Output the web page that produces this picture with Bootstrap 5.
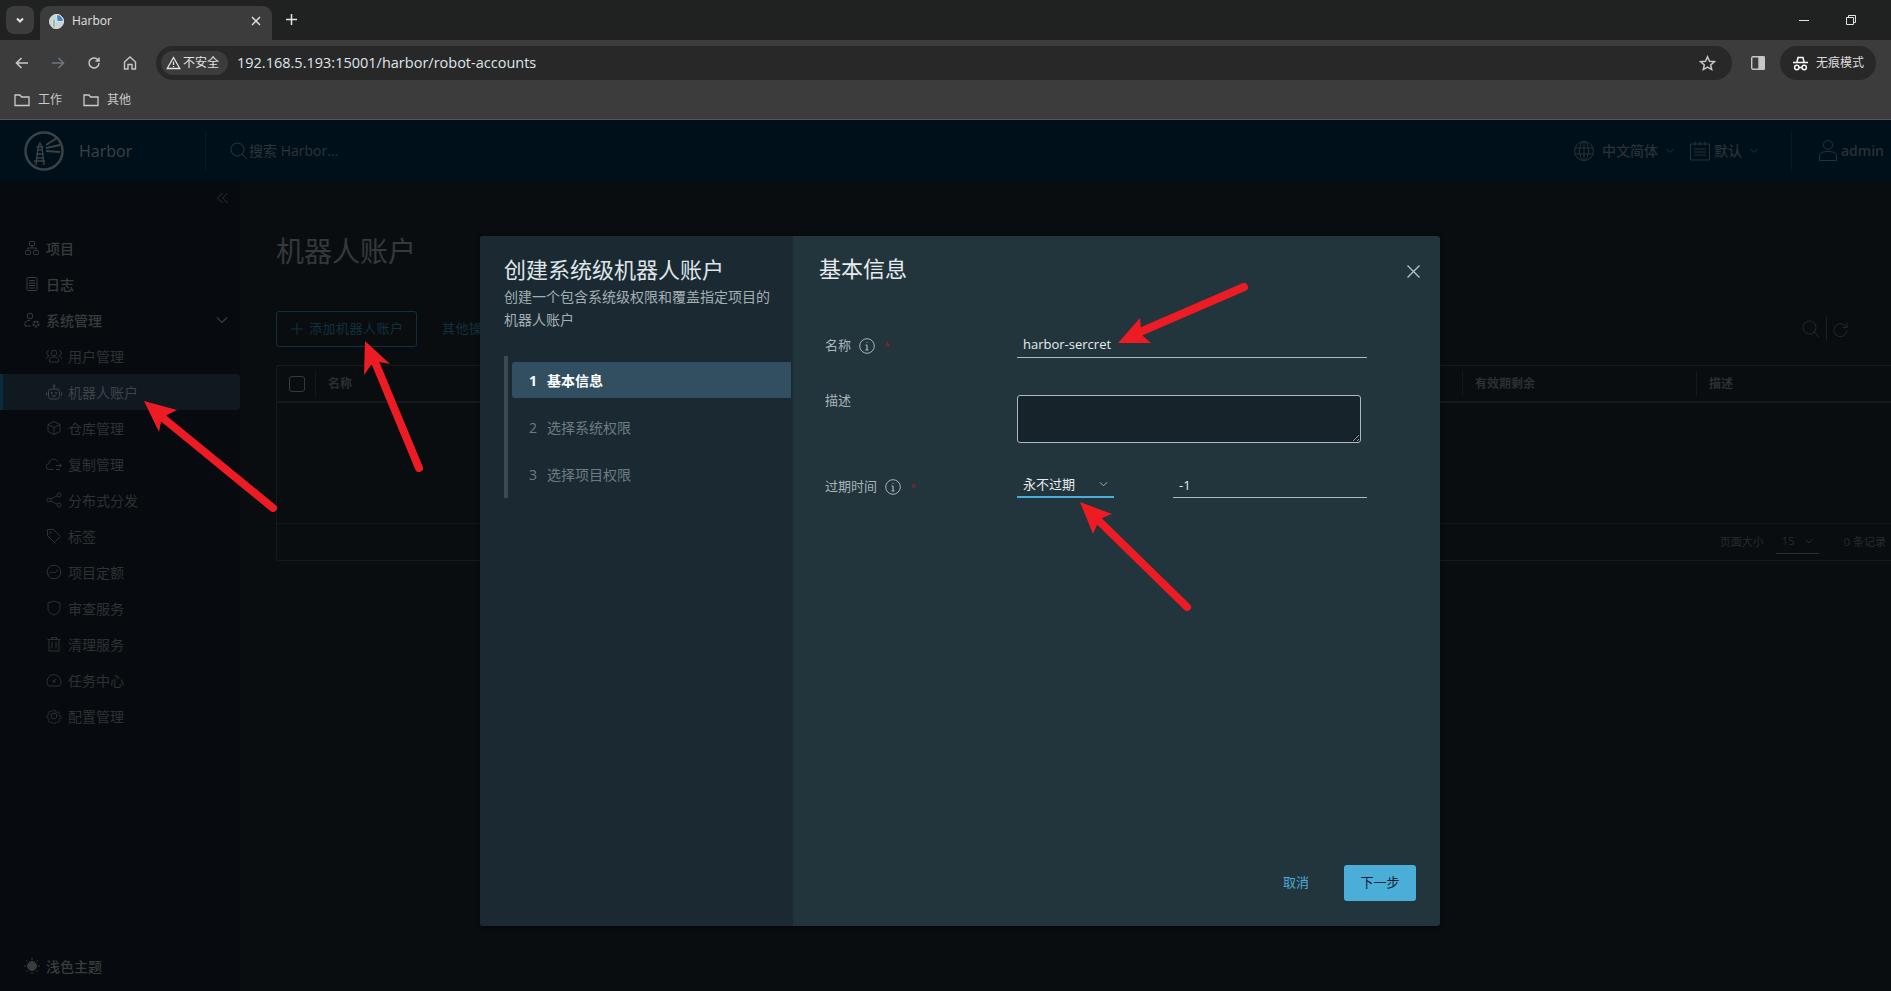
<!DOCTYPE html>
<html lang="zh-CN">
<head>
    <meta charset="UTF-8">
    <title>Harbor</title>
    <link href="https://cdn.jsdelivr.net/npm/bootstrap@5.3.0/dist/css/bootstrap.min.css" rel="stylesheet">
    <style>
        html, body { height: 991px; overflow: hidden; }
        body {
            background: #090d10;
            font-family: "Open Sans", "Noto Sans CJK SC", sans-serif;
            font-size: 14px;
            position: relative;
        }
        svg { display: block; flex: none; fill: none; stroke: currentColor; }

        /* browser chrome */
        .tab-strip { height: 40px; background: #202221; color: #e3e3e3; }
        .tab-menu { width: 28px; height: 28px; margin: 6px 6px 0 6px; background: #3c3c3c; border-radius: 8px; }
        .tab-item { width: 232px; height: 34px; margin-top: 6px; padding: 0 11px 4px 9px; background: #3c3c3c; border-radius: 9px 9px 0 0; font-size: 12px; }
        .tab-new { margin: 14px 0 0 14px; }
        .win-btns { margin: 15px 0 0 auto; gap: 36px; padding-right: 35px; }
        .tool-row { height: 46px; background: #3c3c3c; color: #c7c7c7; padding: 0 0 0 14px; }
        .nav-icons { gap: 20px; width: 142px; }
        .omnibox { width: 1576px; height: 34px; background: #282828; border-radius: 17px; padding: 0 16px 0 5px; }
        .sec-pill { width: 67px; height: 24px; background: #3c3c3c; border-radius: 12px; font-size: 12px; color: #e3e3e3; padding-left: 5px; gap: 2px; }
        .url-text { margin-left: 9px; font-size: 14.5px; color: #dfe6ec; }
        .panel-ico { margin-left: 18px; }
        .incog-pill { width: 96px; height: 34px; background: #282828; border-radius: 17px; font-size: 12px; color: #dcdcdc; padding-left: 12px; gap: 7px; margin-left: 14px; }
        .bookmark-row { height: 34px; background: #3c3c3c; border-bottom: 1px solid #565656; color: #c9c9c9; font-size: 12px; padding: 0 0 5px 14px; gap: 21px; }

        /* harbor header, dimmed by the modal backdrop */
        .hb-header { height: 61px; background: #00101a; color: #2f383c; }
        .hb-brand { width: 206px; height: 40px; padding-left: 24px; gap: 15px; border-right: 1px solid #0a1a22; font-size: 16px; color: #3a4245; }
        .hb-search { padding-left: 24px; gap: 1px; color: #2c3437; }
        .hb-right { margin-left: auto; height: 40px; font-size: 14px; color: #293136; padding-right: 7px; }
        .hb-sep { width: 1px; height: 40px; background: #0a1a22; margin: 0 27px 0 33px; }

        /* side menu */
        .hb-body { height: 810px; }
        .side-nav { width: 240px; background: #070b0f; color: #2e3437; }
        .side-collapse { height: 49px; padding: 11px 12px 0 0; color: #2b3135; }
        .side-row { height: 36px; padding-left: 24px; gap: 6px; color: #373c3e; font-weight: 500; }
        .side-sub { padding-left: 46px; color: #2c3235; font-weight: 400; }
        .side-active { background: #101820; border-left: 3px solid #0a2c3c; border-radius: 0 4px 4px 0; padding-left: 43px; color: #3e4448; }
        .side-foot { margin-top: auto; margin-bottom: 7px; }
        .side-chev { margin-left: auto; margin-right: 12px; }

        /* page behind the modal */
        .hb-main { flex: 1; padding-left: 36px; min-width: 0; }
        .page-title { height: 40px; margin: 50px 0 40px; font-size: 28px; line-height: 40px; color: #33393c; }
        .add-btn { width: 141px; height: 36px; border: 1px solid #0f3040; border-radius: 3px; color: #12303e; font-size: 13px; letter-spacing: .5px; gap: 6px; padding-left: 14px; }
        .more-btn { margin-left: 25px; color: #12303e; font-size: 13px; letter-spacing: .5px; }
        .grid-tools { margin-left: auto; padding-right: 42px; color: #22282b; gap: 6px; }
        .tool-sep { width: 1px; height: 24px; background: #1a2023; }
        .grid-box { margin-top: 18px; border: 1px solid #151a1d; border-right: 0; border-radius: 3px 0 0 3px; font-size: 12px; color: #2b3032; }
        .grid-head { height: 37px; border-bottom: 2px solid #14191c; font-weight: 600; }
        .grid-cell { height: 25px; border-right: 1px solid #14191c; padding-left: 12px; }
        .grid-first { border-left: 1px solid #14191c; flex-grow: 1; }
        .grid-exp { width: 234px; }
        .grid-desc { width: 194px; padding-left: 12px; }
        .grid-check { width: 16px; height: 16px; border: 1px solid #34393b; border-radius: 3px; margin: 0 10px 0 12px; }
        .grid-empty { height: 121px; border-bottom: 1px solid #14191c; }
        .grid-foot { height: 36px; font-size: 11px; color: #262b2e; padding-right: 5px; }
        .size-pick { width: 43px; height: 24px; margin: 0 25px 0 12px; border-bottom: 1px solid #2b3033; padding: 0 6px; }

        /* modal */
        .wizard { position: absolute; left: 480px; top: 236px; width: 960px; height: 690px; background: #22343c; border-radius: 3px; overflow: hidden; box-shadow: 0 1px 4px rgba(0,0,0,.4); }
        .wizard-side { width: 313px; flex: none; background: #1b2a32; border-right: 1px solid #1a2b34; padding-top: 18px; }
        .wizard-head { padding-left: 24px; font-size: 22px; line-height: 30px; color: #dfe5e8; margin-bottom: 1px; }
        .wizard-desc { padding-left: 24px; width: 296px; font-size: 14px; line-height: 23px; color: #a4afb4; }
        .step-rail { margin: 25px 0 0 24px; border-left: 4px solid #3a4a4f; padding: 6px 1px 6px 4px; gap: 11px; }
        .step-item { height: 36px; padding-left: 17px; gap: 10px; color: #6d7c82; font-size: 14px; }
        .step-on { background: #324f61; color: #fff; font-weight: 700; border-radius: 3px 0 0 3px; }
        .wizard-main { padding: 16px 24px 25px 26px; }
        .wizard-title { font-size: 22px; line-height: 32px; color: #e6ecef; }
        .wizard-close { color: #b9c5ca; margin-top: 13px; margin-right: -4px; }
        .form-line { padding-left: 6px; }
        .form-name { width: 192px; gap: 8px; font-size: 13px; color: #a9b5b9; }
        .form-name b { color: #9b1c1c; font-weight: 400; font-size: 11px; margin-left: 1px; }
        .name-one { padding-top: 3px; }
        .name-two { padding-top: 1px; }
        .name-three { padding-top: 5px; }
        .line-input, .line-input:focus {
            height: 27px; padding: 2px 6px 0; background: transparent; border: 0; border-bottom: 1px solid #acbac3;
            border-radius: 0; color: #e8edef; font-size: 13px; box-shadow: none;
        }
        .line-select, .line-select:focus {
            width: 97px; height: 27px; padding: 2px 6px 0; background-color: transparent; border: 0; border-bottom: 2px solid #4aaed9;
            border-radius: 0; color: #e8edef; font-size: 13px; box-shadow: none;
            background-image: url("data:image/svg+xml,%3csvg xmlns='http://www.w3.org/2000/svg' viewBox='0 0 10 6'%3e%3cpath fill='none' stroke='%23acbac3' d='M1 1l4 4 4-4'/%3e%3c/svg%3e");
            background-size: 9px 6px; background-position: right 6px center;
        }
        .area-input, .area-input:focus {
            width: 344px; height: 48px; margin-top: 5px; background: #17232b; border: 1px solid #acbac3; border-radius: 3px; box-shadow: none;
        }
        .btn-cancel { color: #4aaed9; font-size: 13px; margin-right: 35px; }
        .btn-next, .btn-next:hover { width: 72px; height: 36px; padding: 0; background: #4aaed9; border: 0; border-radius: 3px; color: #0a2230; font-size: 13px; }
        .name-input, .name-input:focus { width: 350px; padding-top: 0; }
        .days-input, .days-input:focus { width: 194px; margin-left: 59px; }
        .line-one { margin-top: 47px; }
        .line-two { margin-top: 32px; }
        .line-three { margin-top: 28px; }

        /* red annotation arrows over the screenshot */
        .note-arrows { position: absolute; left: 0; top: 0; width: 1891px; height: 991px; pointer-events: none; stroke: none; }
    </style>
</head>
<body>
    <!-- browser chrome -->
    <div class="tab-strip d-flex align-items-start">
        <div class="tab-menu d-flex align-items-center justify-content-center">
            <svg width="10" height="10" viewBox="0 0 10 10" stroke-width="2"><path d="M2 3.500l3 3 3-3"/></svg>
        </div>
        <div class="tab-item d-flex align-items-center">
            <svg width="15" height="15" viewBox="0 0 15 15" stroke="none"><circle cx="7.500" cy="7.500" r="7" fill="#c8d2d8"/><path d="M7.500.5a7 7 0 0 1 7 7H8z" fill="#3f86c6"/><path d="M4 5h2v9H4z" fill="#3aa655"/></svg>
            <span class="ms-2 flex-grow-1">Harbor</span>
            <svg width="10" height="10" viewBox="0 0 10 10" stroke-width="1.400"><path d="M1 1l8 8M9 1l-8 8"/></svg>
        </div>
        <svg class="tab-new" width="11" height="11" viewBox="0 0 11 11" stroke-width="1.500"><path d="M5.500 0v11M0 5.500h11"/></svg>
        <div class="win-btns d-flex">
            <svg width="11" height="10" viewBox="0 0 11 10"><path d="M0 5.500h10"/></svg>
            <svg width="10" height="10" viewBox="0 0 10 10"><path d="M.5 2.500h7v7h-7zM2.500 2.500V.5h7v7h-2"/></svg>
        </div>
    </div>
    <div class="tool-row d-flex align-items-center">
        <div class="nav-icons d-flex align-items-center">
            <svg width="16" height="16" viewBox="0 0 16 16" stroke-width="1.600"><path d="M14 8H2.500M7.500 3l-5 5 5 5"/></svg>
            <svg class="text-secondary" width="16" height="16" viewBox="0 0 16 16" stroke-width="1.600"><path d="M2 8h11.500M8.500 3l5 5-5 5"/></svg>
            <svg width="16" height="16" viewBox="0 0 16 16" stroke-width="1.500"><path d="M13 8a5 5 0 1 1-1.500-3.600L13 6M13 2.500V6H9.500"/></svg>
            <svg width="16" height="16" viewBox="0 0 16 16" stroke-width="1.400"><path d="M2.500 7L8 2l5.500 5v7H10V9.500H6V14H2.500z"/></svg>
        </div>
        <div class="omnibox d-flex align-items-center">
            <div class="sec-pill d-flex align-items-center">
                <svg width="15" height="14" viewBox="0 0 15 14" stroke-width="1.300"><path d="M7.500 1.500l6.300 11H1.200zM7.500 5.500v3.500M7.500 10v1"/></svg>
                <span>不安全</span>
            </div>
            <span class="url-text">192.168.5.193:15001/harbor/robot-accounts</span>
            <svg class="ms-auto" width="17" height="17" viewBox="0 0 17 17" stroke-width="1.500"><path d="M8.500 1.800l2 4.400 4.800.5-3.600 3.200 1 4.700-4.200-2.400-4.200 2.400 1-4.700L1.700 6.700l4.800-.5z"/></svg>
        </div>
        <svg class="panel-ico" width="16" height="16" viewBox="0 0 16 16" stroke-width="1.400"><rect x="1.700" y="1.700" width="12.600" height="12.600" rx="1.500"/><path d="M9 1.700h4.500a.8.8 0 0 1 .8.800v11a.8.8 0 0 1-.8.800H9z" fill="currentColor"/></svg>
        <div class="incog-pill d-flex align-items-center">
            <svg width="17" height="17" viewBox="0 0 17 17" stroke-width="1.500" class="text-light"><path d="M5 7l1-4.500h5L12 7M1 7.500h15"/><circle cx="4.800" cy="12.500" r="2.200"/><circle cx="12.200" cy="12.500" r="2.200"/><path d="M7 12.500h3"/></svg>
            <span>无痕模式</span>
        </div>
    </div>
    <div class="bookmark-row d-flex align-items-center">
        <div class="d-flex align-items-center gap-2">
            <svg width="16" height="14" viewBox="0 0 16 14" stroke-width="1.300"><path d="M1 2h5l1.500 2H15v8.500H1z"/></svg><span>工作</span>
        </div>
        <div class="d-flex align-items-center gap-2">
            <svg width="16" height="14" viewBox="0 0 16 14" stroke-width="1.300"><path d="M1 2h5l1.500 2H15v8.500H1z"/></svg><span>其他</span>
        </div>
    </div>

    <!-- harbor page -->
    <header class="hb-header d-flex align-items-center">
        <div class="hb-brand d-flex align-items-center">
            <svg width="40" height="40" viewBox="0 0 40 40" stroke="#3c4447"><circle cx="20" cy="20" r="18.500" stroke-width="2.500"/><path d="M10 30h11M12 27h8M12.500 23h7M13 19h6M14 16l2-4 2 4M12.500 16h7" stroke-width="1.400"/><path d="M12 34l2-18M20 34l-2-18" stroke-width="1.400"/><path d="M22 14l11-7M22 17l14-3M22 20l14 1" stroke-width="2"/></svg>
            <span>Harbor</span>
        </div>
        <div class="hb-search d-flex align-items-center">
            <svg width="18" height="18" viewBox="0 0 18 18"><circle cx="7.500" cy="7.500" r="6.500"/><path d="M12 12l5 5"/></svg>
            <span>搜索 Harbor...</span>
        </div>
        <div class="hb-right d-flex align-items-center">
            <svg width="20" height="20" viewBox="0 0 20 20"><circle cx="10" cy="10" r="9.500"/><ellipse cx="10" cy="10" rx="4.500" ry="9.500"/><path d="M1 7h18M1 13h18M10 .5v19"/></svg>
            <span class="ms-1 ps-1 fw-medium">中文简体</span>
            <svg class="ms-2" width="8" height="6" viewBox="0 0 8 6"><path d="M.5 1l3.500 3.500L7.500 1"/></svg>
            <svg class="ms-3" width="20" height="20" viewBox="0 0 20 20"><path d="M.5 3h19v16H.500zM5 .5v4M10 .5v4M15 .5v4M4 8h12M4 11h12M4 14h12"/></svg>
            <span class="ms-1 fw-medium">默认</span>
            <svg class="ms-2" width="8" height="6" viewBox="0 0 8 6"><path d="M.5 1l3.500 3.500L7.500 1"/></svg>
            <div class="hb-sep"></div>
            <svg width="18" height="21" viewBox="0 0 18 21"><circle cx="9" cy="5" r="4.500"/><path d="M.5 20.500V16c0-3 3-4.500 8.500-4.500s8.500 1.500 8.500 4.500v4.500z"/></svg>
            <span class="ms-1 fw-semibold">admin</span>
        </div>
    </header>

    <div class="hb-body d-flex">
        <nav class="side-nav d-flex flex-column">
            <div class="side-collapse d-flex justify-content-end">
                <svg width="11" height="12" viewBox="0 0 11 12"><path d="M5.500 1L.5 6l5 5M10.500 1l-5 5 5 5"/></svg>
            </div>
            <div class="side-row d-flex align-items-center">
                <svg width="16" height="16" viewBox="0 0 16 16"><rect x="5.500" y="1.500" width="5" height="4" rx=".8"/><rect x="1.500" y="10.500" width="5" height="4" rx=".8"/><rect x="9.500" y="10.500" width="5" height="4" rx=".8"/><path d="M4 10.500V8h8v2.500M8 5.500V8"/></svg>
                <span>项目</span>
            </div>
            <div class="side-row d-flex align-items-center">
                <svg width="16" height="16" viewBox="0 0 16 16"><rect x="3" y="1.500" width="10" height="13" rx="1"/><path d="M5 4.500h6M5 7h6M5 9.500h6M5 12h6"/></svg>
                <span>日志</span>
            </div>
            <div class="side-row d-flex align-items-center">
                <svg width="16" height="16" viewBox="0 0 16 16"><circle cx="6" cy="4" r="2.800"/><path d="M1 14v-2.500C1 9.500 3 8.500 6 8.500M1 14h6"/><circle cx="12" cy="12" r="2.500" stroke-width="2" stroke-dasharray="2 1"/></svg>
                <span>系统管理</span>
                <svg class="side-chev" width="12" height="8" viewBox="0 0 12 8" stroke-width="1.200"><path d="M1 1.500l5 5 5-5"/></svg>
            </div>
            <div class="side-row side-sub d-flex align-items-center">
                <svg width="16" height="16" viewBox="0 0 16 16"><circle cx="8" cy="5" r="2.800"/><path d="M3.500 14v-2c0-2 2-3 4.500-3s4.500 1 4.500 3v2zM3.500 7.500A2 2 0 0 1 3 2.500M12.500 7.500a2 2 0 0 0 .5-5M.5 11c0-1.500 1-2.500 2.500-2.500M15.500 11c0-1.500-1-2.500-2.500-2.500"/></svg>
                <span>用户管理</span>
            </div>
            <div class="side-row side-sub side-active d-flex align-items-center">
                <svg width="16" height="16" viewBox="0 0 16 16"><rect x="2.500" y="5" width="11" height="10" rx="2.500"/><path d="M8 5V2.500M.5 8.500v3M15.500 8.500v3M6 12h4"/><circle cx="8" cy="1.800" r="1"/><circle cx="5.800" cy="9" r=".7"/><circle cx="10.200" cy="9" r=".7"/></svg>
                <span>机器人账户</span>
            </div>
            <div class="side-row side-sub d-flex align-items-center">
                <svg width="16" height="16" viewBox="0 0 16 16"><path d="M8 1.500l6 3v7l-6 3-6-3v-7zM2 4.500l6 3 6-3M8 7.500v7"/></svg>
                <span>仓库管理</span>
            </div>
            <div class="side-row side-sub d-flex align-items-center">
                <svg width="16" height="16" viewBox="0 0 16 16"><path d="M7 13.500H3.500a3 3 0 0 1-.5-6 4.500 4.500 0 0 1 8.500-2M10 9.500h5.500M13.500 7.500l2 2-2 2M10 13.500h4"/></svg>
                <span>复制管理</span>
            </div>
            <div class="side-row side-sub d-flex align-items-center">
                <svg width="16" height="16" viewBox="0 0 16 16"><circle cx="3" cy="8" r="2"/><circle cx="13" cy="3" r="2"/><circle cx="13" cy="13" r="2"/><path d="M4.800 7l6.400-3.200M4.800 9l6.400 3.200"/></svg>
                <span>分布式分发</span>
            </div>
            <div class="side-row side-sub d-flex align-items-center">
                <svg width="16" height="16" viewBox="0 0 16 16"><path d="M1.500 1.500h6l7 7-6 6-7-7z"/><circle cx="4.500" cy="4.500" r=".8"/></svg>
                <span>标签</span>
            </div>
            <div class="side-row side-sub d-flex align-items-center">
                <svg width="16" height="16" viewBox="0 0 16 16"><circle cx="8" cy="8" r="6.800"/><path d="M2 11.500c1.500-3 3.500-3.500 5.500-3 2 .3 3.500-.5 4-3"/></svg>
                <span>项目定额</span>
            </div>
            <div class="side-row side-sub d-flex align-items-center">
                <svg width="16" height="16" viewBox="0 0 16 16"><path d="M8 1l6 2v5.500c0 3-2.500 5.300-6 6.500-3.500-1.200-6-3.500-6-6.500V3z"/></svg>
                <span>审查服务</span>
            </div>
            <div class="side-row side-sub d-flex align-items-center">
                <svg width="16" height="16" viewBox="0 0 16 16"><path d="M1.500 3.500h13M5.500 3.500V1.500h5v2M3 3.500V15h10V3.500M6 6v6.500M10 6v6.500"/></svg>
                <span>清理服务</span>
            </div>
            <div class="side-row side-sub d-flex align-items-center">
                <svg width="16" height="16" viewBox="0 0 16 16"><path d="M2.500 14a7 7 0 1 1 11 0zM6.800 9.500l3.500-2.500"/><circle cx="8" cy="9.500" r="1"/></svg>
                <span>任务中心</span>
            </div>
            <div class="side-row side-sub d-flex align-items-center">
                <svg width="16" height="16" viewBox="0 0 16 16"><circle cx="8" cy="8" r="2.800"/><path d="M6.800 1h2.400l.4 2 1.600.8 1.800-1 1.700 1.700-1 1.800.7 1.500 2 .4v2.400l-2 .4-.7 1.500 1 1.800-1.700 1.700-1.800-1-1.600.7-.4 2H6.800l-.4-2-1.600-.7-1.800 1-1.700-1.700 1-1.800-.7-1.500-2-.4V7.200l2-.4.700-1.500-1-1.800 1.700-1.700 1.800 1 1.600-.8z" transform="translate(1.300 1.300) scale(.84)"/></svg>
                <span>配置管理</span>
            </div>
            <div class="side-row side-foot d-flex align-items-center">
                <svg width="16" height="16" viewBox="0 0 16 16"><circle cx="8" cy="8" r="4.500" fill="currentColor"/><path d="M8 0v2M8 14v2M0 8h2M14 8h2M2.300 2.300l1.400 1.400M12.300 12.300l1.400 1.400M2.300 13.700l1.400-1.400M12.300 3.700l1.400-1.400"/></svg>
                <span>浅色主题</span>
            </div>
        </nav>

        <main class="hb-main">
            <div class="page-title">机器人账户</div>
            <div class="d-flex align-items-center">
                <div class="add-btn d-flex align-items-center">
                    <svg width="12" height="12" viewBox="0 0 12 12"><path d="M6 0v12M0 6h12"/></svg>
                    <span>添加机器人账户</span>
                </div>
                <div class="more-btn">其他操作</div>
                <div class="grid-tools d-flex align-items-center">
                    <svg width="18" height="18" viewBox="0 0 18 18"><circle cx="7.500" cy="7.500" r="6.500"/><path d="M12 12l5 5"/></svg>
                    <div class="tool-sep"></div>
                    <svg width="16" height="17" viewBox="0 0 16 17"><path d="M14 9.500a6.500 6.500 0 1 1-2-5L14 6.500M14 1.500v5H9.500"/></svg>
                </div>
            </div>
            <div class="grid-box">
                <div class="grid-head d-flex align-items-center">
                    <div class="grid-check"></div>
                    <div class="grid-cell grid-first d-flex align-items-center">名称</div>
                    <div class="grid-cell grid-exp d-flex align-items-center">有效期剩余</div>
                    <div class="grid-desc">描述</div>
                </div>
                <div class="grid-empty"></div>
                <div class="grid-foot d-flex align-items-center justify-content-end">
                    <span>页面大小</span>
                    <div class="size-pick d-flex align-items-center justify-content-between"><span>15</span><svg width="8" height="5" viewBox="0 0 8 5"><path d="M.5.500L4 4 7.500.5"/></svg></div>
                    <span>0 条记录</span>
                </div>
            </div>
        </main>
    </div>

    <!-- wizard modal -->
    <section class="wizard d-flex">
        <aside class="wizard-side d-flex flex-column">
            <div class="wizard-head">创建系统级机器人账户</div>
            <div class="wizard-desc">创建一个包含系统级权限和覆盖指定项目的机器人账户</div>
            <div class="step-rail d-flex flex-column">
                <div class="step-item step-on d-flex align-items-center"><span>1</span><span>基本信息</span></div>
                <div class="step-item d-flex align-items-center"><span>2</span><span>选择系统权限</span></div>
                <div class="step-item d-flex align-items-center"><span>3</span><span>选择项目权限</span></div>
            </div>
        </aside>
        <div class="wizard-main flex-grow-1 d-flex flex-column">
            <div class="d-flex justify-content-between align-items-start">
                <div class="wizard-title">基本信息</div>
                <svg class="wizard-close" width="13" height="13" viewBox="0 0 13 13" stroke-width="1.300"><path d="M.5.500l12 12M12.500.5l-12 12"/></svg>
            </div>
            <div class="form-line line-one d-flex align-items-center">
                <div class="form-name name-one d-flex align-items-center">
                    <span>名称</span>
                    <svg width="16" height="16" viewBox="0 0 16 16"><circle cx="8" cy="8" r="7.300"/><path d="M8 7v5M6.500 12h3M6.500 7H8M8 4v.8" stroke-width="1.200"/></svg>
                    <b>*</b>
                </div>
                <input class="form-control line-input name-input" type="text" value="harbor-sercret">
            </div>
            <div class="form-line line-two d-flex align-items-start">
                <div class="form-name name-two">描述</div>
                <textarea class="form-control area-input"></textarea>
            </div>
            <div class="form-line line-three d-flex align-items-center">
                <div class="form-name name-three d-flex align-items-center">
                    <span>过期时间</span>
                    <svg width="16" height="16" viewBox="0 0 16 16"><circle cx="8" cy="8" r="7.300"/><path d="M8 7v5M6.500 12h3M6.500 7H8M8 4v.8" stroke-width="1.200"/></svg>
                    <b>*</b>
                </div>
                <select class="form-select line-select"><option>永不过期</option></select>
                <input class="form-control line-input days-input" type="text" value="-1">
            </div>
            <div class="mt-auto d-flex justify-content-end align-items-center">
                <span class="btn-cancel">取消</span>
                <button type="button" class="btn btn-next">下一步</button>
            </div>
        </div>
    </section>

    <!-- annotation arrows -->
    <svg class="note-arrows" viewBox="0 0 1891 991">
        <g fill="#ed1c24" stroke="#ed1c24">
            <path stroke="none" d="M144 401L177 410 167 415 161 422 159 432z"/>
            <path fill="none" stroke-width="8" stroke-linecap="round" d="M163 418L273 508"/>
            <path stroke="none" d="M365 341L390 364 379 362 371 365 364 375z"/>
            <path fill="none" stroke-width="8" stroke-linecap="round" d="M375 362L419 468"/>
            <path stroke="none" d="M1118 343L1140 318 1141 329 1143 336 1151 343z"/>
            <path fill="none" stroke-width="8" stroke-linecap="round" d="M1140 332L1244 287"/>
            <path stroke="none" d="M1080 502L1112 514 1102 518 1097 525 1093 534z"/>
            <path fill="none" stroke-width="8" stroke-linecap="round" d="M1099 521L1187 607"/>
        </g>
    </svg>
</body>
</html>
